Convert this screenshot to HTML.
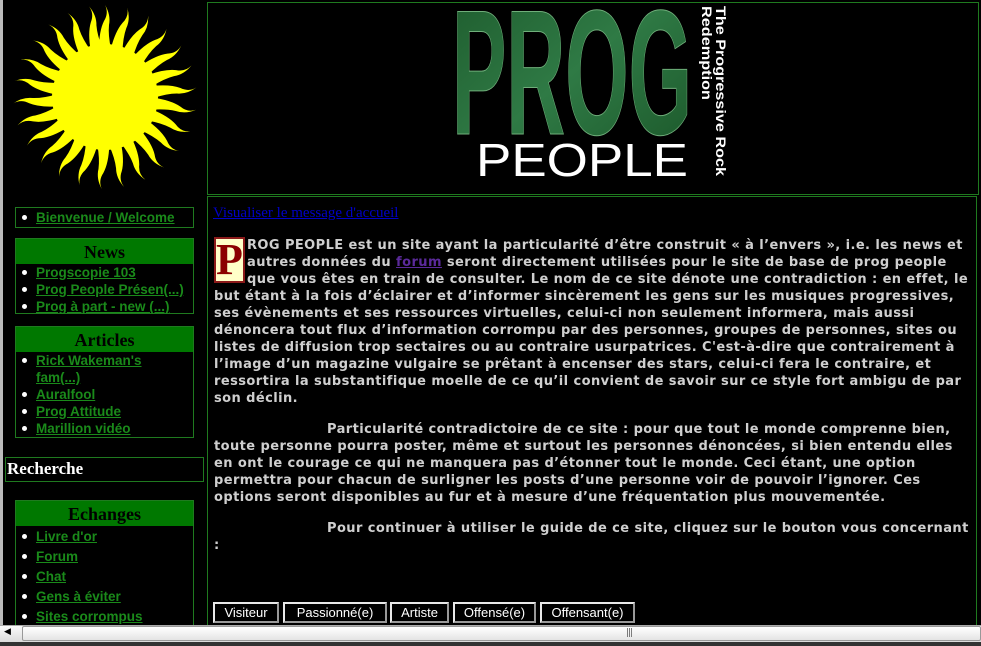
<!DOCTYPE html>
<html><head><meta charset="utf-8"><style>
*{margin:0;padding:0;box-sizing:border-box}
body{width:981px;height:646px;background:#000;overflow:hidden;position:relative;font-family:"DejaVu Sans","Liberation Sans",sans-serif}
.abs{position:absolute}
.box{position:absolute;border:1px solid #1f7a1f}
.hd{background:#007800;color:#000;font-family:"Liberation Serif",serif;font-weight:bold;font-size:18px;text-align:center;height:25px;line-height:26px}
ul{list-style:none}
li{position:relative;padding-left:20px;font-family:"Liberation Sans",Arial,sans-serif;font-weight:bold;font-size:13.5px;color:#1a8a1a;text-decoration:underline;height:17px;line-height:17px;white-space:nowrap}
li:before{content:"";position:absolute;left:6px;top:6px;width:5px;height:5px;border-radius:50%;background:#fff}
.n:before{display:none}
.txt{position:absolute;left:214px;font-size:13px;font-weight:bold;letter-spacing:0.42px;color:#cfcfcf;white-space:nowrap;line-height:17px}
.btn{position:absolute;top:602px;height:21px;border:2px solid #e8e8e8;border-right-color:#999;border-bottom-color:#999;color:#fff;font-family:"Liberation Sans Narrow","Liberation Sans",sans-serif;font-size:13px;text-align:center;line-height:17px;background:#000}
</style></head><body>
<div class="abs" style="left:0;top:0;width:3px;height:625px;background:#bbb"></div>
<svg class="abs" style="left:10px;top:2px" width="190" height="190" viewBox="0 0 190 190">
<defs><path id="r" d="M-6,-48 Q-6,-66 -1,-76 Q4,-84 0,-92 Q6,-82 4,-72 Q3,-62 6,-48 Z" fill="#ffff00"/></defs>
<g transform="translate(95,95)">
<circle r="53" fill="#ffff00"/>
<use href="#r" transform="rotate(0)"/><use href="#r" transform="rotate(14)"/><use href="#r" transform="rotate(28)"/><use href="#r" transform="rotate(42)"/><use href="#r" transform="rotate(56)"/><use href="#r" transform="rotate(70)"/><use href="#r" transform="rotate(84)"/><use href="#r" transform="rotate(98)"/><use href="#r" transform="rotate(112)"/><use href="#r" transform="rotate(126)"/><use href="#r" transform="rotate(140)"/><use href="#r" transform="rotate(154)"/><use href="#r" transform="rotate(168)"/><use href="#r" transform="rotate(182)"/><use href="#r" transform="rotate(196)"/><use href="#r" transform="rotate(210)"/><use href="#r" transform="rotate(224)"/><use href="#r" transform="rotate(238)"/><use href="#r" transform="rotate(252)"/><use href="#r" transform="rotate(266)"/><use href="#r" transform="rotate(280)"/><use href="#r" transform="rotate(294)"/><use href="#r" transform="rotate(308)"/><use href="#r" transform="rotate(322)"/><use href="#r" transform="rotate(336)"/><use href="#r" transform="rotate(350)"/>
</g></svg>

<div class="box" style="left:15px;top:207px;width:179px;height:21px"><ul style="padding-top:1px"><li>Bienvenue / Welcome</li></ul></div>
<div class="box" style="left:15px;top:238px;width:179px;height:76px"><div class="hd">News</div><ul><li>Progscopie 103</li><li>Prog People Présen(...)</li><li>Prog à part - new (...)</li></ul></div>
<div class="box" style="left:15px;top:326px;width:179px;height:112px"><div class="hd">Articles</div><ul><li>Rick Wakeman's</li><li class="n">fam(...)</li><li>Auralfool</li><li>Prog Attitude</li><li>Marillion vidéo</li></ul></div>
<div class="box" style="left:5px;top:457px;width:199px;height:25px;color:#fff;font-family:'Liberation Serif',serif;font-weight:bold;font-size:17px;line-height:22px;padding-left:1px">Recherche</div>
<div class="box" style="left:15px;top:500px;width:179px;height:130px"><div class="hd">Echanges</div><ul style="padding-top:2px"><li style="height:20px">Livre d'or</li><li style="height:20px">Forum</li><li style="height:20px">Chat</li><li style="height:20px">Gens à éviter</li><li style="height:20px">Sites corrompus</li></ul></div>

<div class="box" style="left:207px;top:2px;width:772px;height:193px"></div>
<svg class="abs" style="left:440px;top:0" width="300" height="190">
<defs><linearGradient id="g" x1="0" y1="0" x2="1" y2="1"><stop offset="0" stop-color="#1d5a2c"/><stop offset=".5" stop-color="#2f7a45"/><stop offset="1" stop-color="#1a5528"/></linearGradient></defs>
<text x="12" y="134" font-family="Liberation Sans Narrow,Liberation Sans,sans-serif" font-weight="bold" font-size="178" fill="url(#g)" stroke="#6fae7a" stroke-width="1" textLength="240" lengthAdjust="spacingAndGlyphs">PROG</text>
<text x="36" y="176" font-family="Liberation Sans,sans-serif" font-size="46" fill="#fff" textLength="212" lengthAdjust="spacingAndGlyphs">PEOPLE</text>
<text transform="translate(276,6) rotate(90)" font-family="Liberation Sans,sans-serif" font-weight="bold" font-size="14" fill="#fff" textLength="170" lengthAdjust="spacingAndGlyphs">The Progressive Rock</text>
<text transform="translate(262,6) rotate(90)" font-family="Liberation Sans,sans-serif" font-weight="bold" font-size="14" fill="#fff" textLength="94" lengthAdjust="spacingAndGlyphs">Redemption</text>
</svg>

<div class="box" style="left:207px;top:196px;width:770px;height:430px"></div>
<div class="abs" style="left:213px;top:205px;font-family:'Liberation Serif',serif;font-weight:normal;font-size:15px;color:#0000c8;text-decoration:underline">Visualiser le message d'accueil</div>
<div class="abs" style="left:214px;top:237px;width:31px;height:46px;background:#ffffc8;border:2px solid #8b1a1a;color:#8b0000;font-family:'Liberation Serif',serif;font-weight:bold;font-size:44px;line-height:42px;text-align:center">P</div>
<div class="txt" style="top:237px;left:247px">ROG PEOPLE est un site ayant la particularité d’être construit « à l’envers », i.e. les news et<br>autres données du <span style="color:#5b2a9b;text-decoration:underline">forum</span> seront directement utilisées pour le site de base de prog people<br>que vous êtes en train de consulter. Le nom de ce site dénote une contradiction : en effet, le</div>
<div class="txt" style="top:288px">but étant à la fois d’éclairer et d’informer sincèrement les gens sur les musiques progressives,<br>ses évènements et ses ressources virtuelles, celui-ci non seulement informera, mais aussi<br>dénoncera tout flux d’information corrompu par des personnes, groupes de personnes, sites ou<br>listes de diffusion trop sectaires ou au contraire usurpatrices. C'est-à-dire que contrairement à<br>l’image d’un magazine vulgaire se prêtant à encenser des stars, celui-ci fera le contraire, et<br>ressortira la substantifique moelle de ce qu’il convient de savoir sur ce style fort ambigu de par<br>son déclin.</div>
<div class="txt" style="top:421px"><span style="display:inline-block;width:113px"></span>Particularité contradictoire de ce site : pour que tout le monde comprenne bien,<br>toute personne pourra poster, même et surtout les personnes dénoncées, si bien entendu elles<br>en ont le courage ce qui ne manquera pas d’étonner tout le monde. Ceci étant, une option<br>permettra pour chacun de surligner les posts d’une personne voir de pouvoir l’ignorer. Ces<br>options seront disponibles au fur et à mesure d’une fréquentation plus mouvementée.</div>
<div class="txt" style="top:520px"><span style="display:inline-block;width:113px"></span>Pour continuer à utiliser le guide de ce site, cliquez sur le bouton vous concernant<br>:</div>

<div class="btn" style="left:213px;width:66px">Visiteur</div>
<div class="btn" style="left:283px;width:104px">Passionné(e)</div>
<div class="btn" style="left:390px;width:59px">Artiste</div>
<div class="btn" style="left:453px;width:83px">Offensé(e)</div>
<div class="btn" style="left:540px;width:95px">Offensant(e)</div>

<div class="abs" style="left:0;top:625px;width:981px;height:17px;background:linear-gradient(#fafafa,#dcdcdc);border-top:1px solid #aaa"></div>
<div class="abs" style="left:4px;top:627px;font-size:9px;color:#000">◀</div>
<div class="abs" style="left:22px;top:626px;width:959px;height:15px;border:1px solid #999;border-radius:2px;background:linear-gradient(#fff,#e4e4e4)"></div>
<div class="abs" style="left:626px;top:628px;font-size:9px;color:#555;letter-spacing:-1px">|||</div>
<div class="abs" style="left:0;top:642px;width:981px;height:4px;background:#333"></div>
</body></html>
